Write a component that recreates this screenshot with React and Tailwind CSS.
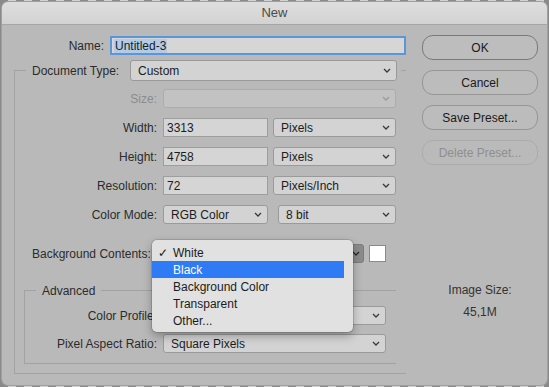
import React from "react";

const Chevron = ({ c = "#3a3a3a" }) => (
  <svg width="8" height="5" viewBox="0 0 8 5" className="shrink-0">
    <path d="M1 1L4 4L7 1" fill="none" stroke={c} strokeWidth="1.3" />
  </svg>
);

const Select = ({ text, className = "", disabled = false }) => (
  <div
    className={
      "flex h-[19px] items-center justify-between rounded-[3px] border pl-[7px] pr-[5px] text-[12px] " +
      (disabled
        ? "border-[#acacac] bg-[#c2c2c2] text-[#8a8a8a] "
        : "border-[#9a9a9a] bg-[#d3d3d3] text-[#1c1c1c] ") +
      className
    }
  >
    <span className="leading-none">{text}</span>
    <Chevron c={disabled ? "#9a9a9a" : "#3a3a3a"} />
  </div>
);

const Input = ({ text, className = "" }) => (
  <div
    className={
      "flex h-[19px] items-center border border-[#9e9e9e] bg-[#d5d5d5] pl-[3px] text-[12px] text-[#1c1c1c] " +
      className
    }
  >
    {text}
  </div>
);

const Label = ({ children, className = "", muted = false, left = false }) => (
  <div
    className={
      "shrink-0 whitespace-nowrap text-[12px] leading-none " +
      (left ? "text-left " : "text-right ") +
      (muted ? "text-[#8c8c8c] " : "text-[#2b2b2b] ") +
      className
    }
  >
    {children}
  </div>
);

const Button = ({ children, primary = false, disabled = false }) => (
  <div
    className={
      "flex h-[25px] w-[116px] items-center justify-center rounded-[11px] border text-[12px] " +
      (primary
        ? "border-[#7a7a7a] bg-[#bdbdbd] text-[#1a1a1a]"
        : disabled
        ? "border-[#ababab] bg-[#bababa] text-[#8f8f8f]"
        : "border-[#959595] bg-[#bcbcbc] text-[#1a1a1a]")
    }
  >
    {children}
  </div>
);

export default function App() {
  return (
    <div className="h-[387px] w-[549px] overflow-hidden bg-[repeating-linear-gradient(90deg,#8a8a8a_0_8px,#d2d2d2_8px_16px)] pl-[2px] pt-[2px] font-['Liberation_Sans',Arial,sans-serif]">
      <div className="relative h-[383px] w-[545px] overflow-hidden rounded-[6px] bg-[#b9b9b9] shadow-[0_0_0_1px_#9f9f9f]">
        {/* Title bar */}
        <div className="flex h-[23px] items-center justify-center border-b border-[#a6a6a6] bg-[linear-gradient(#dedede,#d2d2d2)] text-[13px] text-[#4a4a4a]">
          New
        </div>

        <div className="flex">
          {/* Left column */}
          <div className="w-[404px]">
            {/* Name */}
            <div className="mt-[11px] flex h-[19px] items-center">
              <Label className="w-[102px]">Name:</Label>
              <div className="ml-[6px] flex h-[19px] w-[296px] items-center border-2 border-[#5a97d8] bg-[#d6d6d6] pl-[2px] text-[12px] text-[#1c1c1c]">
                <span className="bg-[#b3cbe6] px-[1px] leading-[14px]">Untitled-3</span>
              </div>
            </div>

            {/* Outer group */}
            <div className="ml-[12px] mt-[15px] w-[392px] border-b border-l border-t border-[#a2a2a2] pb-[9px]">
              <div className="-mt-[11px] ml-[11px] flex h-[21px] w-[375px] items-center bg-[#b9b9b9] pl-[6px] pr-[4px]">
                <Label left className="w-[98px]">Document Type:</Label>
                <Select text="Custom" className="h-[21px] w-[267px]" />
              </div>

              <div className="mt-[8px] flex h-[19px] items-center">
                <Label muted className="w-[142px]">Size:</Label>
                <Select text="" disabled className="ml-[6px] w-[233px]" />
              </div>

              <div className="mt-[10px] flex h-[19px] items-center">
                <Label className="w-[142px]">Width:</Label>
                <Input text="3313" className="ml-[6px] w-[105px]" />
                <Select text="Pixels" className="ml-[5px] w-[123px]" />
              </div>

              <div className="mt-[10px] flex h-[19px] items-center">
                <Label className="w-[142px]">Height:</Label>
                <Input text="4758" className="ml-[6px] w-[105px]" />
                <Select text="Pixels" className="ml-[5px] w-[123px]" />
              </div>

              <div className="mt-[10px] flex h-[19px] items-center">
                <Label className="w-[142px]">Resolution:</Label>
                <Input text="72" className="ml-[6px] w-[105px]" />
                <Select text="Pixels/Inch" className="ml-[5px] w-[123px]" />
              </div>

              <div className="mt-[10px] flex h-[19px] items-center">
                <Label className="w-[142px]">Color Mode:</Label>
                <Select text="RGB Color" className="ml-[6px] w-[105px]" />
                <Select text="8 bit" className="ml-[10px] w-[118px]" />
              </div>

              <div className="mt-[20px] flex h-[19px] items-center">
                <Label left className="w-[148px] pl-[17px]">Background Contents:</Label>
                <div className="flex h-[19px] w-[201px] items-center justify-end rounded-[3px] border border-[#7c7c7c] bg-[#8c8c8c] pr-[3px]">
                  <Chevron c="#2a2a2a" />
                </div>
                <div className="ml-[5px] h-[17px] w-[17px] border border-[#8a8a8a] bg-white" />
              </div>

              {/* Advanced group */}
              <div className="ml-[9px] mt-[27px] w-[372px] border-b border-l border-t border-[#a2a2a2] pb-[10px]">
                <div className="-mt-[8px] ml-[11px] flex h-[15px] w-fit items-center bg-[#b9b9b9] px-[6px] text-[12px] text-[#2b2b2b]">
                  Advanced
                </div>
                <div className="mt-[8px] flex h-[19px] items-center">
                  <Label className="w-[132px]">Color Profile:</Label>
                  <Select text="" className="ml-[6px] w-[223px]" />
                </div>
                <div className="mt-[9px] flex h-[19px] items-center">
                  <Label className="w-[132px]">Pixel Aspect Ratio:</Label>
                  <Select text="Square Pixels" className="ml-[6px] w-[223px]" />
                </div>
              </div>
            </div>
          </div>

          {/* Right column */}
          <div className="flex flex-1 flex-col pl-[16px] pt-[10px]">
            <div className="flex flex-col gap-[10px]">
              <Button primary>OK</Button>
              <Button>Cancel</Button>
              <Button>Save Preset...</Button>
              <Button disabled>Delete Preset...</Button>
            </div>
            <div className="mt-[118px] w-[116px] text-center text-[12px] leading-[15px] text-[#333333]">
              Image Size:
            </div>
            <div className="mt-[7px] w-[116px] text-center text-[12px] leading-[15px] text-[#333333]">
              45,1M
            </div>
          </div>
        </div>

        {/* Popup menu */}
        <div className="absolute left-[150px] top-[238px] w-[201px] rounded-[5px] bg-[#e1e1e1] pb-[3px] pt-[4px] text-[12px] text-[#1c1c1c] shadow-[0_0_0_1px_rgba(0,0,0,0.12),0_4px_10px_rgba(0,0,0,0.3)]">
          <div className="relative flex h-[17px] items-center pl-[21px]">
            <span className="absolute left-[6px]">✓</span>
            White
          </div>
          <div className="mr-[9px] flex h-[17px] items-center bg-[#2f7bf5] pl-[21px] text-white">Black</div>
          <div className="flex h-[17px] items-center pl-[21px]">Background Color</div>
          <div className="flex h-[17px] items-center pl-[21px]">Transparent</div>
          <div className="flex h-[17px] items-center pl-[21px]">Other...</div>
        </div>
      </div>
    </div>
  );
}
